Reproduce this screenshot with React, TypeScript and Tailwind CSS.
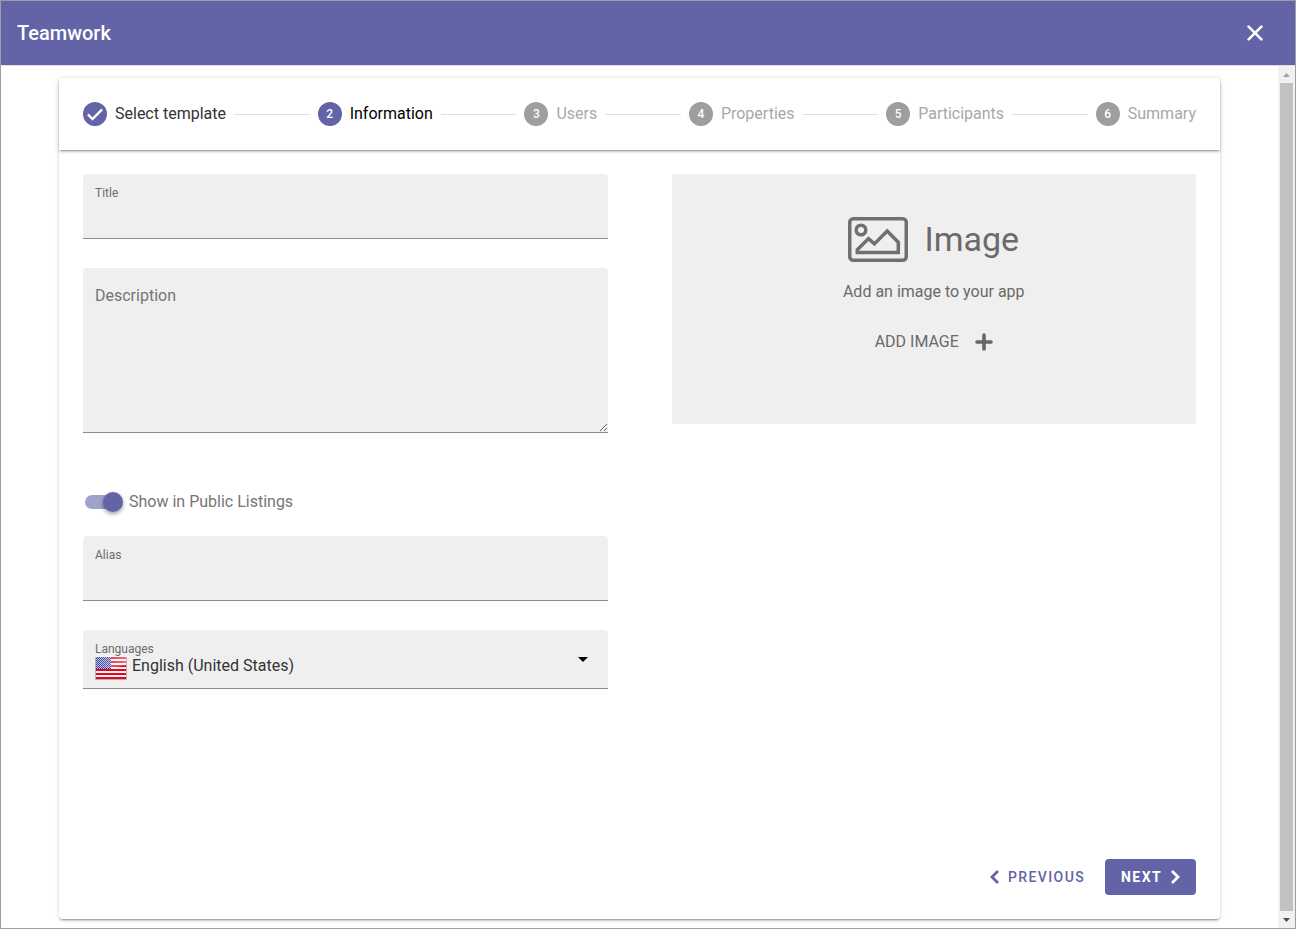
import { useState } from "react";

type StepState = "done" | "active" | "pending";

const steps: { label: string; state: StepState }[] = [
  { label: "Select template", state: "done" },
  { label: "Information", state: "active" },
  { label: "Users", state: "pending" },
  { label: "Properties", state: "pending" },
  { label: "Participants", state: "pending" },
  { label: "Summary", state: "pending" },
];

const labelStyles: Record<StepState, string> = {
  done: "text-[#333333]",
  active: "text-black",
  pending: "text-[#a8a8a8]",
};

function Stepper() {
  return (
    <ol className="flex h-[72px] items-center gap-2 rounded-t px-6 shadow-[0_3px_1px_-2px_rgba(0,0,0,0.2),0_2px_2px_0_rgba(0,0,0,0.14),0_1px_5px_0_rgba(0,0,0,0.12)]">
      {steps.map((step, i) => (
        <li
          key={step.label}
          aria-current={step.state === "active" ? "step" : undefined}
          className={i < steps.length - 1 ? "flex flex-1 basis-auto items-center gap-2" : "flex items-center gap-2"}
        >
          <span
            className={
              step.state === "pending"
                ? "flex size-6 items-center justify-center rounded-full bg-[#9e9e9e] text-xs font-medium text-white"
                : "flex size-6 items-center justify-center rounded-full bg-[#6264a7] text-xs font-medium text-white"
            }
          >
            {step.state === "done" ? (
              <svg viewBox="0 0 24 24" className="size-5" fill="none" stroke="currentColor" strokeWidth="2.800" aria-hidden="true">
                <path d="M3.500 12.500 9 18 20.500 6.500" />
              </svg>
            ) : (
              i + 1
            )}
          </span>
          <span className={`text-base whitespace-nowrap ${labelStyles[step.state]}`}>{step.label}</span>
          {i < steps.length - 1 && <span className="h-px flex-1 bg-[#e0e0e0]" />}
        </li>
      ))}
    </ol>
  );
}

function TextField({ id, label }: { id: string; label: string }) {
  return (
    <div className="flex h-[65px] flex-col rounded-t border-b border-[#8d8d8d] bg-[#efefef] px-3 pt-[9px]">
      <label htmlFor={id} className="text-xs leading-5 text-[#6c6c6c]">
        {label}
      </label>
      <input id={id} type="text" className="w-full flex-1 bg-transparent text-base text-[#212121] outline-none" />
    </div>
  );
}

function UsFlag() {
  const stripes = [0, 2, 4, 6, 8, 10];
  return (
    <svg viewBox="0 0 32 24" className="h-6 w-8 shrink-0" aria-hidden="true">
      <defs>
        <pattern id="stars" width="2" height="2" patternUnits="userSpaceOnUse">
          <rect width="2" height="2" fill="#1c2a8c" />
          <rect width="1" height="1" fill="#b4bae0" />
          <rect x="1" y="1" width="1" height="1" fill="#b4bae0" />
        </pattern>
        <linearGradient id="shine" x1="0" y1="0" x2="1" y2="0">
          <stop offset="0" stopColor="#fff" stopOpacity="0.1" />
          <stop offset="1" stopColor="#fff" stopOpacity="0.4" />
        </linearGradient>
      </defs>
      <rect y="1" width="32" height="23" rx="1" fill="#000" opacity="0.25" />
      <rect x="1" width="30" height="23" fill="#fbf3f3" />
      {stripes.map((n) => (
        <rect key={n} x="1" y={n * 2 + 1} width="30" height="2" fill="#e3061d" />
      ))}
      <rect x="1" y="1" width="15" height="12" fill="url(#stars)" />
      <path d="M1 1h30v8L16 12H1z" fill="url(#shine)" />
    </svg>
  );
}

function ImagePanel() {
  return (
    <section className="flex h-[250px] flex-col items-center bg-[#efefef] pt-10 text-[#6a6a6a]">
      <div className="flex items-center gap-4">
        <svg viewBox="0 0 60 45" className="h-[45px] w-[60px]" fill="none" stroke="#707070" strokeWidth="3.500" aria-hidden="true">
          <rect x="1.750" y="1.750" width="56.500" height="41.500" rx="3.500" />
          <circle cx="13" cy="13" r="4.800" />
          <path d="M9.300 35.500V32.800L20.500 21.600l5.900 5.300L39.200 14 50.300 25.200v10.300z" />
        </svg>
        <h2 className="text-[34px] leading-[50px]">Image</h2>
      </div>
      <p className="mt-4 text-base leading-6">Add an image to your app</p>
      <button type="button" className="mt-5 flex h-9 items-center gap-4 text-base">
        ADD IMAGE
        <svg viewBox="0 0 18 18" className="size-[18px]" fill="none" stroke="#666666" strokeWidth="3.600" strokeLinecap="round" aria-hidden="true">
          <path d="M9 2v14M2 9h14" />
        </svg>
      </button>
    </section>
  );
}

function Chevron({ d }: { d: string }) {
  return (
    <svg viewBox="0 0 10 14" className="h-[14px] w-[10px]" fill="none" stroke="currentColor" strokeWidth="2.800" aria-hidden="true">
      <path d={d} />
    </svg>
  );
}

function ScrollRail() {
  return (
    <div aria-hidden="true" className="flex w-[17px] shrink-0 flex-col items-center bg-[#f1f1f1]">
      <svg viewBox="0 0 17 17" className="size-[17px]">
        <path d="M5 11h7L8.500 7z" fill="#a3a3a3" />
      </svg>
      <div className="w-[13px] flex-1 bg-[#c1c1c1]" />
      <svg viewBox="0 0 17 17" className="size-[17px]">
        <path d="M5 7h7l-3.500 4z" fill="#505050" />
      </svg>
    </div>
  );
}

export default function App() {
  const [listed, setListed] = useState(true);

  return (
    <div className="flex min-h-screen flex-col border border-[#9e9e9e] bg-white font-[Roboto,sans-serif] text-[#212121]">
      <header className="flex h-[65px] items-center justify-between border-b border-[#dcdcea] bg-[#6264a7] pr-8 pl-4 text-white">
        <h1 className="text-xl font-medium">Teamwork</h1>
        <button type="button" aria-label="Close" className="flex size-4 items-center justify-center">
          <svg viewBox="0 0 16 16" className="size-4" fill="none" stroke="currentColor" strokeWidth="2.600" strokeLinecap="round" aria-hidden="true">
            <path d="M1.600 1.600l12.800 12.800M14.400 1.600L1.600 14.400" />
          </svg>
        </button>
      </header>

      <div className="flex flex-1">
        <main className="flex flex-1 flex-col px-[58px] pt-3 pb-[9px]">
          <div className="flex flex-1 flex-col rounded shadow-[0_3px_1px_-2px_rgba(0,0,0,0.2),0_2px_2px_0_rgba(0,0,0,0.14),0_1px_5px_0_rgba(0,0,0,0.12)]">
            <Stepper />
            <form className="flex flex-1 flex-col justify-between p-6" onSubmit={(e) => e.preventDefault()}>
              <div className="grid grid-cols-2 items-start gap-16">
                <div className="flex flex-col">
                  <TextField id="title" label="Title" />

                  <div className="relative mt-[29px]">
                    <label htmlFor="description" className="absolute top-4 left-3 text-base text-[#757575]">
                      Description
                    </label>
                    <textarea
                      id="description"
                      className="block h-[165px] w-full resize-y rounded-t border-b border-[#8d8d8d] bg-[#efefef] px-3 pt-10 text-base outline-none"
                    />
                  </div>

                  <label className="mt-[55px] flex h-7 w-fit cursor-pointer items-center gap-[6px] pl-[2px] text-base text-[#757575]">
                    <span className="flex h-[14px] w-[38px] items-center justify-end rounded-full bg-linear-to-r from-[#a1a2cb] from-90% to-transparent to-90% has-[:not(:checked)]:justify-start">
                      <input
                        type="checkbox"
                        role="switch"
                        checked={listed}
                        onChange={(e) => setListed(e.target.checked)}
                        className="size-5 appearance-none rounded-full bg-[#bdbdbd] shadow-[0_2px_4px_rgba(0,0,0,0.4)] checked:bg-[#6264a7]"
                      />
                    </span>
                    Show in Public Listings
                  </label>

                  <div className="mt-5">
                    <TextField id="alias" label="Alias" />
                  </div>

                  <div className="mt-[29px] flex h-[59px] items-start rounded-t border-b border-[#8d8d8d] bg-[#efefef] pr-5 pl-3">
                    <div className="flex flex-1 flex-col pt-3">
                      <label htmlFor="languages" className="text-xs leading-[14px] text-[#6c6c6c]">
                        Languages
                      </label>
                      <div className="flex items-start gap-[5px]">
                        <UsFlag />
                        <select id="languages" className="h-5 flex-1 appearance-none bg-transparent text-base leading-5 text-[#333333] outline-none">
                          <option>English (United States)</option>
                        </select>
                      </div>
                    </div>
                    <svg viewBox="0 0 10 5" className="h-[5px] w-[10px] self-center" aria-hidden="true">
                      <path d="M0 0h10L5 5z" fill="#000" />
                    </svg>
                  </div>
                </div>

                <ImagePanel />
              </div>

              <div className="flex items-center justify-end gap-5">
                <button type="button" className="flex h-9 items-center gap-2 text-sm font-medium tracking-widest text-[#6264a7]">
                  <Chevron d="M8 1L2 7l6 6" />
                  PREVIOUS
                </button>
                <button type="submit" className="flex h-9 items-center gap-2 rounded bg-[#6264a7] px-4 text-sm font-bold tracking-widest text-white">
                  NEXT
                  <Chevron d="M2 1l6 6-6 6" />
                </button>
              </div>
            </form>
          </div>
        </main>
        <ScrollRail />
      </div>
    </div>
  );
}
